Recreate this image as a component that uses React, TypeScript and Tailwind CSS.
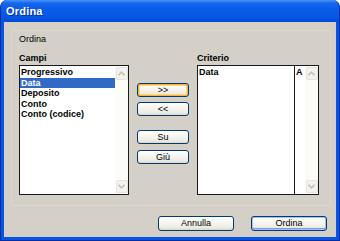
import React from 'react';

const btn =
  'flex items-center justify-center rounded-[3px] border border-[#003c74] bg-[linear-gradient(to_bottom,#ffffff_0%,#f6f5f0_45%,#ebe9e0_85%,#d8d5c8_100%)] text-[9px] leading-none text-black';

function ScrollArrow({ up }: { up?: boolean }) {
  return (
    <div className="h-[13px] w-full flex items-center justify-center rounded-[2px] border border-[#e6e4dc] bg-[#f3f2ec]">
      <svg width="7" height="5" viewBox="0 0 7 5">
        <path
          d={up ? 'M0.5 4.2 L3.5 1.2 L6.5 4.2' : 'M0.5 0.8 L3.5 3.8 L6.5 0.8'}
          fill="none"
          stroke="#c4c2b6"
          strokeWidth="1.6"
        />
      </svg>
    </div>
  );
}

function ScrollBar() {
  return (
    <div className="w-[13px] flex flex-col justify-between bg-[#fbfbf8] px-[0.5px] py-[1px]">
      <ScrollArrow up />
      <ScrollArrow />
    </div>
  );
}

const campi = ['Progressivo', 'Data', 'Deposito', 'Conto', 'Conto (codice)'];

export default function App() {
  return (
    <div className="w-[340px] h-[241px] flex flex-col overflow-hidden rounded-t-[7px] bg-[#0753e3] border border-t-0 border-[#0a2d9c] font-['Liberation_Sans',Arial,sans-serif]">
      <div className="h-[22px] shrink-0 -mx-px flex items-center pl-[6px] bg-[linear-gradient(to_bottom,#4a95f8_0%,#1667ee_14%,#0a5de8_40%,#0656e3_80%,#0349d4_100%)]">
        <span className="text-[11px] font-bold text-white tracking-[0.2px] [text-shadow:1px_1px_0_#0a2f9a]">Ordina</span>
      </div>

      <div className="flex-1 mx-[3px] mb-[3px] flex flex-col bg-[#d4d0c8] pt-[8px] pl-[7px] pr-[5px]">
        <div className="h-[176px] rounded-[2px] border border-[#dcd9d1] pl-[7px] pt-[3px]">
          <div className="text-[9px] leading-[10px] text-black">Ordina</div>

          <div className="mt-[9px] grid grid-cols-[110px_52px_122px] gap-x-[8px] text-[9px] text-black">
            <div>
              <div className="font-bold leading-[10px]">Campi</div>
              <div className="mt-[2px] h-[130px] flex border border-[#1a1a1a] bg-white">
                <div className="flex-1 pt-[1px] font-bold">
                  {campi.map((c) => (
                    <div
                      key={c}
                      className={`h-[10.5px] leading-[10.5px] pl-[1px] ${c === 'Data' ? 'bg-[#316ac5] text-white' : ''}`}
                    >
                      {c}
                    </div>
                  ))}
                </div>
                <ScrollBar />
              </div>
            </div>

            <div className="pt-[30px] flex flex-col">
              <button className={`${btn} h-[14px] shadow-[inset_0_0_0_1px_#f8b330,inset_0_0_0_2px_#fcd68c]`}>&gt;&gt;</button>
              <button className={`${btn} h-[14px] mt-[5px]`}>&lt;&lt;</button>
              <button className={`${btn} h-[14px] mt-[14px]`}>Su</button>
              <button className={`${btn} h-[14px] mt-[6px]`}>Giù</button>
            </div>

            <div>
              <div className="font-bold leading-[10px]">Criterio</div>
              <div className="mt-[2px] h-[130px] flex border border-[#1a1a1a] bg-white font-bold">
                <div className="flex-1 pt-[1px] pl-[1px] leading-[10.5px]">Data</div>
                <div className="w-[11px] border-l border-[#1a1a1a] pt-[1px] pl-[1px] leading-[10.5px]">A</div>
                <ScrollBar />
              </div>
            </div>
          </div>
        </div>

        <div className="mt-[10px] flex justify-end gap-[17px] pr-[4px]">
          <button className={`${btn} h-[15px] w-[76px]`}>Annulla</button>
          <button className={`${btn} h-[15px] w-[76px] shadow-[inset_0_0_0_1px_#a6c2f4,inset_0_-1px_0_1px_#7b9ae8]`}>Ordina</button>
        </div>
      </div>
    </div>
  );
}
